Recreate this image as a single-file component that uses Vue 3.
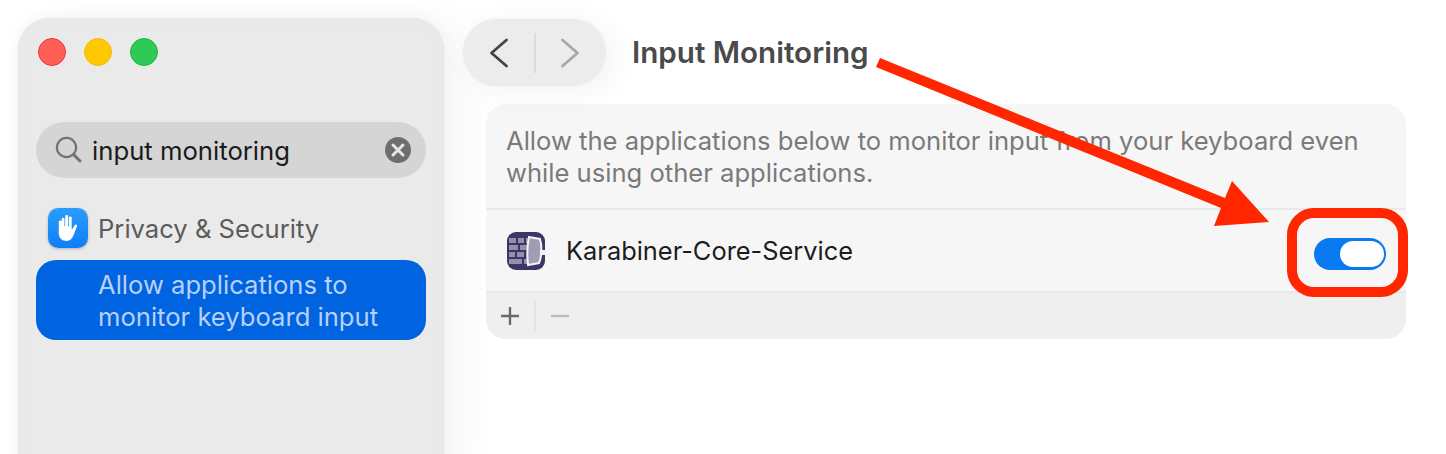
<template>
  <div class="page">
    <aside class="sidebar">
      <div class="traffic">
        <span class="dot red"></span>
        <span class="dot yellow"></span>
        <span class="dot green"></span>
      </div>
      <div class="search">
        <svg class="search-icon" width="28" height="28" viewBox="0 0 28 28" fill="none">
          <circle cx="11.5" cy="11.5" r="9.6" stroke="#727272" stroke-width="2.2" />
          <path d="M18.6 18.6L25 25" stroke="#727272" stroke-width="3" stroke-linecap="round" />
        </svg>
        <span class="search-text">input monitoring</span>
        <span class="clear">
          <svg width="26" height="26" viewBox="0 0 26 26" fill="none">
            <path d="M8 8L18 18M18 8L8 18" stroke="#e6e6e6" stroke-width="3" stroke-linecap="round" />
          </svg>
        </span>
      </div>
      <div class="nav-group">
        <span class="hand-icon">
          <svg width="24" height="28" viewBox="0 0 26 30" fill="#fff">
            <path d="M6.2 5.5a1.5 1.5 0 0 1 3 0V13h.8V2.600a1.600 1.600 0 0 1 3.200 0V13h.8V4a1.500 1.500 0 0 1 3 0v12l.6.400 2.600-4.400c.9-1.400 3.200-.5 2.500 1.200l-3.700 9.600C17.600 26.500 15.200 29 11.500 29 7 29 3 26.500 3 21V8.500a1.500 1.500 0 0 1 3.200 0Z" />
          </svg>
        </span>
        <span class="group-label">Privacy &amp; Security</span>
      </div>
      <div class="selected-item">
        <span>Allow applications to</span>
        <span>monitor keyboard input</span>
      </div>
    </aside>

    <main class="content">
      <header class="toolbar">
        <div class="back-forward">
          <svg width="22" height="30" viewBox="0 0 22 30" fill="none">
            <path d="M18.500 2L3.500 15L18.500 28" stroke="#444" stroke-width="2.800" stroke-linecap="round" stroke-linejoin="round" />
          </svg>
          <span class="nav-sep"></span>
          <svg width="22" height="30" viewBox="0 0 22 30" fill="none">
            <path d="M3.500 2L18.500 15L3.500 28" stroke="#a8a8a8" stroke-width="2.800" stroke-linecap="round" stroke-linejoin="round" />
          </svg>
        </div>
        <h1 class="title">Input Monitoring</h1>
      </header>

      <section class="panel">
        <p class="panel-desc">
          Allow the applications below to monitor input from your keyboard even<br />
          while using other applications.
        </p>
        <div class="app-row">
          <svg class="app-icon" width="38" height="38" viewBox="0 0 38 38">
            <rect width="38" height="38" rx="9" fill="#3d3568" />
            <g fill="#938fad">
              <rect x="2" y="6" width="7" height="5" />
              <rect x="11" y="6" width="6" height="5" />
              <rect x="19" y="6" width="4" height="5" />
              <rect x="2" y="13" width="9" height="5" />
              <rect x="13" y="13" width="7" height="5" />
              <rect x="2" y="20" width="6" height="5" />
              <rect x="10" y="20" width="7" height="5" />
              <rect x="2" y="27" width="13" height="5" />
              <rect x="17" y="27" width="4" height="5" />
            </g>
            <path d="M22 5L33 7C35 13 35 25 32 31L21 33C20 24 20 14 22 5Z" fill="#a09cb5" stroke="#f4f4f6" stroke-width="2" />
            <path d="M33 18h5v5h-5z" fill="#f4f4f6" />
          </svg>
          <span class="app-name">Karabiner-Core-Service</span>
          <div class="toggle"><span class="knob"></span></div>
        </div>
        <div class="panel-footer">
          <span class="plus">
            <svg width="20" height="20" viewBox="0 0 20 20" fill="none">
              <path d="M10 1V19M1 10H19" stroke="#6a6a6a" stroke-width="2.400" />
            </svg>
          </span>
          <span class="footer-sep"></span>
          <span class="minus">
            <svg width="20" height="20" viewBox="0 0 20 20" fill="none">
              <path d="M1 10H19" stroke="#bdbdbd" stroke-width="2.400" />
            </svg>
          </span>
        </div>
      </section>
    </main>

    <!-- annotations drawn on top of the screenshot -->
    <svg class="arrow" width="1446" height="454" viewBox="0 0 1446 454">
      <polygon fill="#ff2600" points="880,58 1225,198 1232,181 1269,222 1214,226 1221,208 876,67" />
    </svg>
    <div class="highlight"></div>
  </div>
</template>

<script setup>
</script>

<style scoped>
.page {
  position: relative;
  width: 1446px;
  height: 454px;
  overflow: hidden;
  display: flex;
  align-items: flex-start;
  background: #fff;
  font-family: Inter, "Liberation Sans", sans-serif;
}

/* sidebar */
.sidebar {
  box-sizing: border-box;
  flex: 0 0 426px;
  height: 480px;
  margin: 18px 0 0 18px;
  padding: 20px 18px 0;
  background: #eaeaea;
  border-radius: 32px;
  box-shadow: inset 0 0 24px rgba(0, 0, 0, 0.015), 0 0 0 1px #f2f2f2, 0 0 14px 6px rgba(0, 0, 0, 0.025), 24px 0 40px rgba(0, 0, 0, 0.03);
}

.traffic {
  display: flex;
  gap: 18px;
  padding-left: 2px;
  margin-bottom: 56px;
}

.dot {
  box-sizing: border-box;
  width: 28px;
  height: 28px;
  border-radius: 50%;
  border: 1px solid;
}
.red { background: #ff5f57; border-color: #f0333f; }
.yellow { background: #fdc800; border-color: #f2bd00; }
.green { background: #2fc956; border-color: #14bb3a; }

.search {
  box-sizing: border-box;
  display: flex;
  align-items: center;
  height: 56px;
  padding: 0 15px 0 19px;
  background: #d5d5d5;
  border-radius: 28px;
}

.search-icon { flex: none; }

.search-text {
  flex: 1;
  margin-left: 9px;
  font-size: 25.700px;
  color: #1b1b1b;
}

.clear {
  display: flex;
  width: 26px;
  height: 26px;
  border-radius: 50%;
  background: #6e6e6e;
}

.nav-group {
  display: flex;
  align-items: center;
  height: 40px;
  margin: 30px 0 0 12px;
}

.hand-icon {
  display: flex;
  align-items: center;
  justify-content: center;
  width: 40px;
  height: 40px;
  border-radius: 10px;
  background: linear-gradient(#2b9dfd, #0d7ff5);
  box-shadow: 0 1px 3px rgba(0, 0, 0, 0.25);
}

.group-label {
  margin-left: 10px;
  font-size: 25.600px;
  color: #5b5b5b;
}

.selected-item {
  box-sizing: border-box;
  display: flex;
  flex-direction: column;
  justify-content: center;
  height: 80px;
  margin-top: 12px;
  padding: 2px 0 0 62px;
  border-radius: 20px;
  background: #0064e1;
  color: #b9d0fb;
  font-size: 25.600px;
  line-height: 32px;
}

/* right side */
.content {
  flex: 1;
  min-width: 0;
  padding: 18px 40px 0 18px;
}

.toolbar {
  display: flex;
  align-items: center;
  height: 69px;
}

.back-forward {
  box-sizing: border-box;
  display: flex;
  align-items: center;
  justify-content: space-between;
  width: 145px;
  height: 69px;
  padding: 0 25px;
  border-radius: 35px;
  background: #ececec;
  border: 1px solid #f6f6f6;
  box-shadow: 8px 4px 30px rgba(0, 0, 0, 0.05);
}

.nav-sep {
  width: 2px;
  height: 40px;
  background: #dcdcdc;
}

.title {
  margin: 0 0 2px 25px;
  font-size: 29.600px;
  font-weight: 600;
  color: #4a4a4a;
}

.panel {
  margin: 17px 0 0 24px;
  border-radius: 20px;
  background: #f6f6f6;
  overflow: hidden;
}

.panel-desc {
  margin: 0;
  padding: 21px 20px 19px;
  font-size: 25.600px;
  line-height: 32px;
  color: #7a7a7a;
}

.app-row {
  display: flex;
  align-items: center;
  height: 81px;
  padding: 0 20px 0 21px;
  border-top: 2px solid #e9e9e9;
  border-bottom: 2px solid #e9e9e9;
}

.app-name {
  flex: 1;
  margin-left: 21px;
  font-size: 25.400px;
  color: #1c1c1c;
}

.toggle {
  position: relative;
  box-sizing: border-box;
  width: 72px;
  height: 32px;
  margin-top: 6px;
  border-radius: 16px;
  background: #0a7af2;
}

.knob {
  position: absolute;
  top: 3px;
  right: 2px;
  width: 44px;
  height: 26px;
  border-radius: 13px;
  background: #fff;
}

.panel-footer {
  display: flex;
  align-items: center;
  height: 46px;
  padding-left: 14px;
  background: #efefef;
}

.plus, .minus { display: flex; }

.footer-sep {
  width: 2px;
  height: 32px;
  margin: 0 14px;
  background: #e3e3e3;
}

.arrow {
  position: absolute;
  top: 0;
  left: 0;
  pointer-events: none;
}

.highlight {
  position: absolute;
  box-sizing: border-box;
  left: 1287px;
  top: 208px;
  width: 121px;
  height: 89px;
  border: 10px solid #ff2600;
  border-radius: 27px;
}
</style>
